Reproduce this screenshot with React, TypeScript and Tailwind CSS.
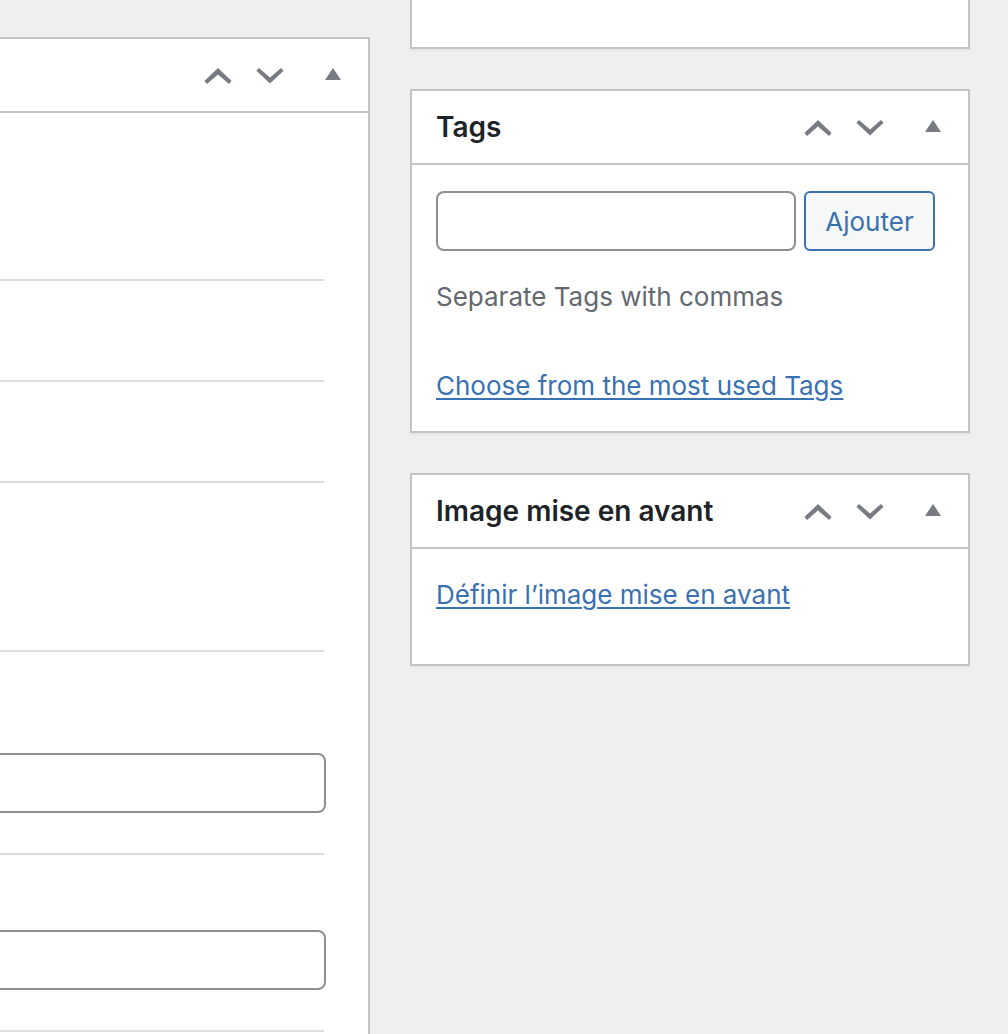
import type { ReactNode } from "react";

function PanelControls({ name }: { name: string }) {
  return (
    <div className="flex items-center pt-0.5 text-[#787c82]">
      <button type="button" aria-label={`Move ${name} up`} className="flex h-9 w-[52px] items-center justify-center">
        <svg width="28" height="16" viewBox="0 0 28 16" fill="currentColor" aria-hidden="true">
          <path d="M14 0 L27.6 13 L25 16 L14 6.4 L3 16 L0.4 13 Z" />
        </svg>
      </button>
      <button type="button" aria-label={`Move ${name} down`} className="flex h-9 w-[52px] items-center justify-center">
        <svg width="28" height="16" viewBox="0 0 28 16" fill="currentColor" aria-hidden="true">
          <path d="M14 15.6 L0.4 2.8 L3 0 L14 9.4 L25 0 L27.6 2.8 Z" />
        </svg>
      </button>
      <button type="button" aria-label={`Toggle ${name}`} aria-expanded="true" className="flex h-9 w-[72px] items-center justify-center pb-1 pl-0.5">
        <svg width="16" height="12" viewBox="0 0 16 12" fill="currentColor" aria-hidden="true">
          <path d="M8 0 L16 12 H0 Z" />
        </svg>
      </button>
    </div>
  );
}

function Panel({ title, children }: { title: string; children: ReactNode }) {
  return (
    <section className="border-2 border-[#c3c4c7] bg-white shadow-[0_2px_2px_rgba(0,0,0,0.04)]">
      <header className="flex h-[74px] items-center justify-between border-b-2 border-[#c3c4c7] pl-6">
        <h2 className="text-[28px] leading-9 font-semibold text-[#1d2327]">{title}</h2>
        <PanelControls name={title} />
      </header>
      {children}
    </section>
  );
}

const row = "border-b-2 border-[#dcdcde]";
const field = "block h-[60px] rounded-lg border-2 border-[#8c8f94] bg-white px-4 text-[26px] outline-none";
const link = "text-[#3a71b0] underline decoration-2 underline-offset-3";

export default function App() {
  return (
    <div className="flex h-screen gap-10 overflow-hidden bg-[#efefef] pr-[38px] font-['Inter',sans-serif] text-[26px] leading-9">
      <main className="flex min-w-0 flex-1 flex-col pt-[37px]">
        <section className="flex-1 border-t-2 border-r-2 border-[#c3c4c7] bg-white">
          <header className="flex h-[74px] items-center justify-end border-b-2 border-[#c3c4c7]">
            <PanelControls name="fields" />
          </header>
          <div className="pr-11">
            <div className={`${row} h-[168px]`} />
            <div className={`${row} h-[101px]`} />
            <div className={`${row} h-[101px]`} />
            <div className={`${row} h-[169px]`} />
            <div className={`${row} pt-[101px] pb-10`}>
              <div className="-mr-0.5 -ml-4">
                <input type="text" aria-label="First field" className={`${field} w-full`} />
              </div>
            </div>
            <div className={`${row} pt-[75px] pb-10`}>
              <div className="-mr-0.5 -ml-4">
                <input type="text" aria-label="Second field" className={`${field} w-full`} />
              </div>
            </div>
          </div>
        </section>
      </main>

      <aside className="flex w-[560px] shrink-0 flex-col gap-10">
        <section className="h-[49px] border-2 border-t-0 border-[#c3c4c7] bg-white shadow-[0_2px_2px_rgba(0,0,0,0.04)]" />
        <Panel title="Tags">
          <div className="px-6 pt-[26px] pb-[27px]">
            <form className="flex gap-2 pr-[9px]" onSubmit={(e) => e.preventDefault()}>
              <input type="text" aria-label="Add tags" className={`${field} min-w-0 flex-1`} />
              <button type="submit" className="h-[60px] w-[131px] rounded-md border-2 border-[#3a71b0] bg-[#f6f7f7] pt-0.5 text-[#3a71b0]">
                Ajouter
              </button>
            </form>
            <p className="mt-7 text-[#646970]">Separate Tags with commas</p>
            <p className="mt-[53px]">
              <a href="#tags" className={link}>Choose from the most used Tags</a>
            </p>
          </div>
        </Panel>
        <Panel title="Image mise en avant">
          <div className="px-6 pt-7 pb-[51px]">
            <a href="#image" className={link}>Définir l’image mise en avant</a>
          </div>
        </Panel>
      </aside>
    </div>
  );
}
